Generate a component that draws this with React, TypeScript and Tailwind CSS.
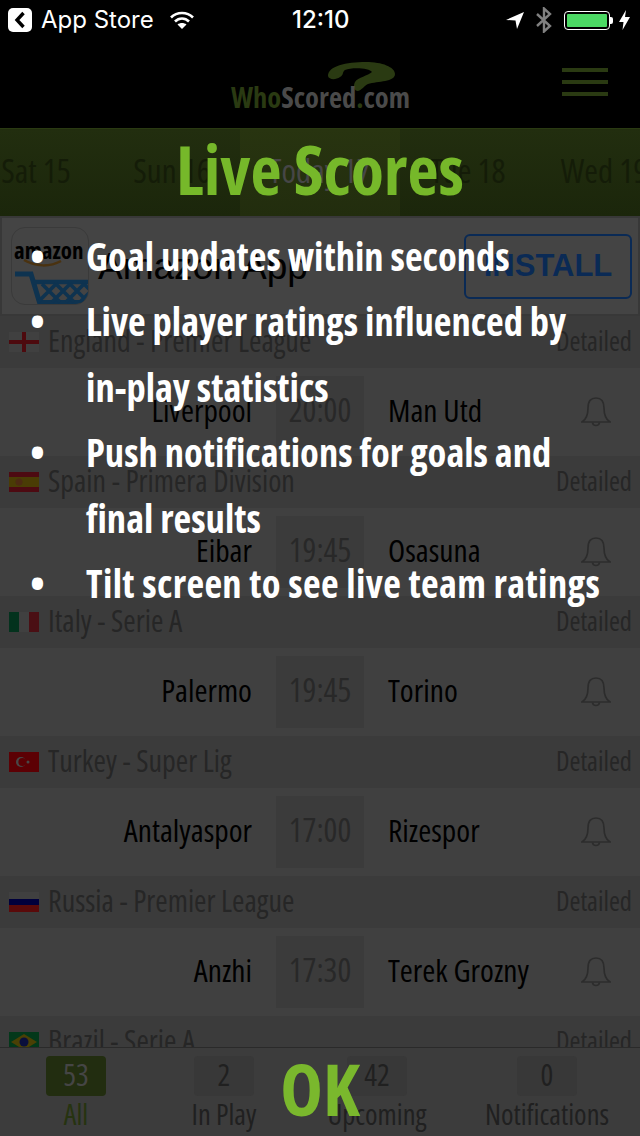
const narrow = "[font-family:'Open_Sans',sans-serif] [font-stretch:75%]";

function Flag({ c }: { c: string }) {
  return (
    <svg width="30" height="20" viewBox="0 0 30 20" className="shrink-0">
      {c === "en" && (<><rect width="30" height="20" fill="#404040" /><rect x="13" width="4" height="20" fill="#4d0a0e" /><rect y="8" width="30" height="4" fill="#4d0a0e" /></>)}
      {c === "es" && (<><rect width="30" height="20" fill="#4d0a12" /><rect y="5" width="30" height="10" fill="#4a3c05" /><circle cx="10" cy="10" r="3.5" fill="#4d2a12" /></>)}
      {c === "it" && (<><rect width="10" height="20" fill="#03321d" /><rect x="10" width="10" height="20" fill="#404040" /><rect x="20" width="10" height="20" fill="#4a0f14" /></>)}
      {c === "tr" && (<><rect width="30" height="20" fill="#5c0004" /><circle cx="12" cy="10" r="5" fill="#484848" /><circle cx="13.4" cy="10" r="4" fill="#5c0004" /><circle cx="19" cy="10" r="1.5" fill="#484848" /></>)}
      {c === "ru" && (<><rect width="30" height="7" fill="#404040" /><rect y="7" width="30" height="6" fill="#00003c" /><rect y="13" width="30" height="7" fill="#5a0a0a" /></>)}
      {c === "br" && (<><rect width="30" height="20" fill="#03381a" /><polygon points="15,2 28,10 15,18 2,10" fill="#4a4005" /><circle cx="15" cy="10" r="4.5" fill="#0a0f3c" /></>)}
    </svg>
  );
}

function League({ c, name }: { c: string; name: string }) {
  return (
    <div className="h-[52px] shrink-0 bg-[#3b3b3b] flex items-center pl-[9px] pr-2 text-[#262626] text-[30px]">
      <Flag c={c} />
      <span className="ml-[9px] pb-[3px]">{name}</span>
      <span className="ml-auto pb-[1px] text-[26.5px]">Detailed</span>
    </div>
  );
}

function Match({ home, time, away }: { home: string; time: string; away: string }) {
  return (
    <div className="h-[88px] shrink-0 bg-[#404040] flex items-center text-[31.5px]">
      <div className="w-[252px] pb-[4px] text-right text-black">{home}</div>
      <div className="ml-6 w-[88px] h-[72px] pb-[3px] bg-[#3b3b3b] text-[#282828] text-[32.5px] flex items-center justify-center">{time}</div>
      <div className="ml-6 w-[193px] pb-[4px] text-black whitespace-nowrap">{away}</div>
      <svg width="30" height="30" viewBox="0 0 30 30" fill="none" stroke="#2c2c2c" strokeWidth="1.7">
        <path d="M1 25 C6 22 7 17 7 11 C7 4 10 1 15 1 C20 1 23 4 23 11 C23 17 24 22 29 25 Z" />
        <path d="M11.5 25.5 C12 29.5 18 29.5 18.5 25.5" />
      </svg>
    </div>
  );
}

function Tab({ n, label, active, w }: { n: string; label: string; active?: boolean; w: string }) {
  return (
    <div className={`flex flex-col items-center ${w}`}>
      <div className={`w-[60px] h-10 rounded-[4px] mt-2 pb-[4px] flex items-center justify-center text-[30px] ${active ? "bg-[#222d10] text-[#454545]" : "bg-[#383838] text-[#202020]"}`}>{n}</div>
      <div className={`text-[28.5px] leading-9 ${active ? "text-[#263310]" : "text-[#202020]"}`}>{label}</div>
    </div>
  );
}

export default function App() {
  const date = ["Sat 15", "Sun 16", "Today 17", "Tue 18", "Wed 19"];
  const list = [["Goal updates within seconds"], ["Live player ratings influenced by", "in-play statistics"], ["Push notifications for goals and", "final results"]];
  return (
    <div className={`relative w-[640px] h-[1136px] overflow-hidden bg-[#404040] ${narrow}`}>
      <div className="h-10 bg-black text-white flex items-center relative [font-family:'Inter',sans-serif] [font-stretch:100%]">
        <div className="ml-2 w-6 h-6 bg-white rounded-[5px] flex items-center justify-center">
          <svg width="12" height="18" viewBox="0 0 12 18"><path d="M9.5 2 L3 9 L9.5 16" fill="none" stroke="#000" strokeWidth="3.4" /></svg>
        </div>
        <span className="ml-[9px] text-[24px]">App Store</span>
        <svg className="ml-[16px]" width="24" height="18" viewBox="0 0 24 18" fill="none" stroke="#fff" strokeWidth="2.6">
          <path d="M1 6.5 C7 0.5 17 0.5 23 6.5" /><path d="M5 10.5 C9 6.5 15 6.5 19 10.5" />
          <path d="M12 18 L7.5 13.5 C10 11.5 14 11.5 16.5 13.5 Z" fill="#fff" stroke="none" />
        </svg>
        <span className="absolute left-[292px] text-[24px] font-medium">12:10</span>
        <svg className="absolute left-[506px] top-[12px]" width="18" height="17" viewBox="0 0 18 17"><path d="M18 0 L0 8 L9.5 8.5 L11 17 Z" fill="#fff" /></svg>
        <svg className="absolute left-[536px] top-[7px]" width="16" height="26" viewBox="0 0 16 26" fill="none" stroke="#808080" strokeWidth="2.4">
          <path d="M1 7 L14 19 L8 24.5 V1.5 L14 7 L1 19" />
        </svg>
        <div className="absolute left-[564px] top-[11px] w-[46px] h-[19px] border border-white rounded-[4px] p-[2px]"><div className="w-full h-full bg-[#4cd964] rounded-[1px]" /></div>
        <div className="absolute left-[610px] top-[17px] w-[3px] h-[7px] bg-white rounded-r-[2px]" />
        <svg className="absolute left-[619px] top-[10px]" width="11" height="20" viewBox="0 0 11 20"><path d="M7 0 L0 12 H4.5 L3.5 20 L11 7 H6 Z" fill="#fff" /></svg>
      </div>

      <div className="h-[88px] bg-black relative">
        <svg className="absolute left-[328px] top-[22px]" width="67" height="30" viewBox="0 0 67 30"><path d="M0 14 C0 4 18 0 38 0 C54 0 67 5 67 12 C67 20 50 19 40 22 C36 24 34 28 30 29 C26 29 25 24 27 20 C30 15 40 14 44 10 C42 6 24 5 17 8 C14 10 16 13 12 15 C8 18 1 18 0 14 Z" fill="#2a3a12" /></svg>
        <div className="absolute left-[231px] top-[41px] text-[28.5px] font-bold leading-8 whitespace-nowrap text-[#4a4a4a]"><span className="text-[#2a3a12]">Who</span>Scored<span className="text-[#2a3a12]">.</span>com</div>
        <div className="absolute left-[562px] top-[28px] w-[46px] flex flex-col gap-2">
          <div className="h-1 bg-[#2a3a12]" /><div className="h-1 bg-[#2a3a12]" /><div className="h-1 bg-[#2a3a12]" />
        </div>
      </div>

      <div className="h-[88px] bg-linear-to-b from-[#222e0f] to-[#1b260b] flex items-center text-[33px] text-[#141c08] border-t border-[#2a3a12]">
        {date.map((d, i) => (
          <div key={d} className={`h-full pb-[4px] shrink-0 flex items-center justify-center ${i === 2 ? "w-[160px] bg-linear-to-b from-[#283410] to-[#222d0e] text-[#464646]" : "w-[136px]"} ${i === 0 ? "ml-[-32px]" : ""}`}>{d}</div>
        ))}
      </div>

      <div className="h-[100px] bg-[#444444] border-2 border-[#383838] flex items-center">
        <div className="ml-[9px] w-[78px] h-[78px] rounded-[14px] border border-[#3a3a3a] relative overflow-hidden shrink-0">
          <div className="absolute left-[2px] top-[11px] text-[23px] font-bold text-black leading-none">amazon</div>
          <svg className="absolute left-0 top-0" width="78" height="78" viewBox="0 0 78 78" fill="none">
            <path d="M12 32 C24 39 38 39 49 33" stroke="#4a3210" strokeWidth="2.5" />
            <path d="M3 46 H19 L28 76" stroke="#0e3350" strokeWidth="5" />
            <path d="M21 54 H78" stroke="#0e3350" strokeWidth="4.5" />
            <path d="M26 74 H72" stroke="#0e3350" strokeWidth="4" />
            <path d="M30 56 L48 74 M44 56 L62 74 M58 56 L76 74 M72 56 L78 62 M44 56 L26 74 M58 56 L40 74 M72 56 L54 74 M78 64 L68 74" stroke="#0e3350" strokeWidth="3.6" />
          </svg>
        </div>
        <div className="ml-[9px] text-[37px] text-black mt-[2px] [font-family:'Liberation_Sans',sans-serif] [font-stretch:100%]">Amazon App</div>
        <div className="ml-auto mr-[6px] w-[168px] h-[65px] border-2 border-[#0a2a55] rounded-[6px] flex items-center justify-center text-[31px] font-bold text-[#0a2a55] [font-family:'Liberation_Sans',sans-serif] [font-stretch:100%]">INSTALL</div>
      </div>

      <League c="en" name="England - Premier League" />
      <Match home="Liverpool" time="20:00" away="Man Utd" />
      <League c="es" name="Spain - Primera Division" />
      <Match home="Eibar" time="19:45" away="Osasuna" />
      <League c="it" name="Italy - Serie A" />
      <Match home="Palermo" time="19:45" away="Torino" />
      <League c="tr" name="Turkey - Super Lig" />
      <Match home="Antalyaspor" time="17:00" away="Rizespor" />
      <League c="ru" name="Russia - Premier League" />
      <Match home="Anzhi" time="17:30" away="Terek Grozny" />
      <League c="br" name="Brazil - Serie A" />

      <div className="absolute left-0 bottom-0 w-[640px] h-[89px] bg-[#3c3c3c] border-t border-[#2a2a2a] flex">
        <Tab n="53" label="All" active w="w-[152px]" />
        <Tab n="2" label="In Play" w="w-[144px]" />
        <Tab n="42" label="Upcoming" w="w-[162px]" />
        <Tab n="0" label="Notifications" w="w-[178px]" />
      </div>

      <div className="absolute left-0 top-[125px] w-[640px] text-center text-[68px] font-bold leading-[88px] text-[#76b82a]">Live Scores</div>
      <ul className="absolute left-[30px] top-[224px] w-[600px] text-[38.5px] font-bold leading-[65.4px] text-white whitespace-nowrap">
        {list.map((l) => (
          <li key={l[0]} className="flex">
            <span className="w-[56px] shrink-0">•</span>
            <span>{l.map((t) => <div key={t}>{t}</div>)}</span>
          </li>
        ))}
        <li className="flex">
          <span className="w-[56px] shrink-0">•</span>
          <span className="tracking-[0.37px]">Tilt screen to see live team ratings</span>
        </li>
      </ul>
      <div className="absolute left-0 top-[1044px] w-[640px] text-center text-[72px] font-bold leading-[88px] text-[#7ab82d]">OK</div>
    </div>
  );
}
